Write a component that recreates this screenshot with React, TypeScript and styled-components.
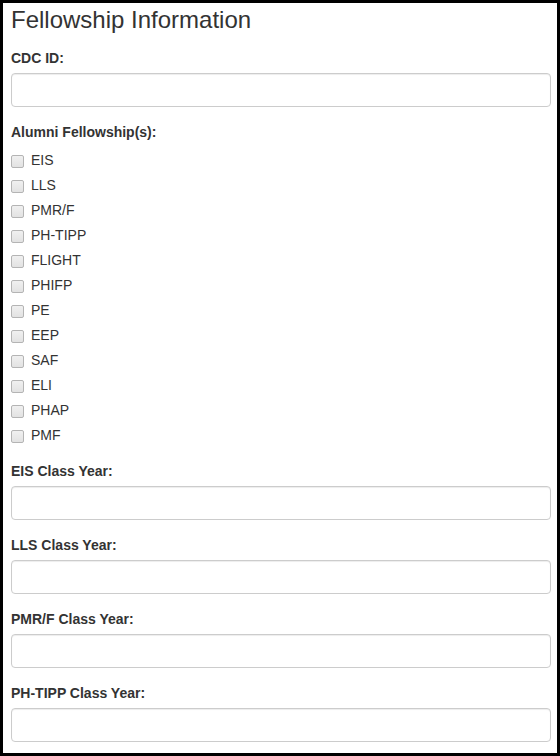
import React from 'react';
import styled, { createGlobalStyle } from 'styled-components';

const GlobalStyle = createGlobalStyle`
  html, body {
    margin: 0;
    padding: 0;
    background: #fff;
  }
  body {
    font-family: "Liberation Sans", Arial, Helvetica, sans-serif;
    font-size: 14px;
    line-height: 1.42857;
    color: #333;
  }
  * {
    box-sizing: border-box;
  }
`;

const StyledFrame = styled.div`
  height: 100vh;
  border: 3px solid #000;
  padding: 4px 6px 0 8px;
  overflow: hidden;
  background: #fff;
`;

const StyledTitle = styled.h3`
  font-size: 24px;
  font-weight: 500;
  line-height: 1.1;
  margin: 0 0 15px 0;
  color: #333;
`;

const StyledFormGroup = styled.div<{ $bottom?: number }>`
  margin-bottom: ${(p) => p.$bottom ?? 15}px;
`;

const StyledLabel = styled.label`
  display: block;
  font-weight: 700;
  font-size: 14px;
  line-height: 20px;
  margin-bottom: 5px;
`;

const StyledInput = styled.input`
  display: block;
  width: 100%;
  height: 34px;
  padding: 6px 12px;
  font-family: inherit;
  font-size: 14px;
  color: #555;
  background: #fff;
  border: 1px solid #ccc;
  border-radius: 4px;
  box-shadow: inset 0 1px 1px rgba(0, 0, 0, 0.075);
  outline: none;
`;

const StyledCheckList = styled.div`
  display: flex;
  flex-direction: column;
  gap: 5px;
  padding-top: 4px;
`;

const StyledCheckRow = styled.label`
  display: flex;
  align-items: center;
  height: 20px;
  font-size: 14px;
  font-weight: 400;
  color: #333;
  cursor: pointer;
`;

const StyledCheckbox = styled.input`
  appearance: none;
  width: 13px;
  height: 13px;
  margin: 1px 7px 0 0;
  border: 1px solid #b4b4b4;
  border-radius: 2px;
  background: linear-gradient(#f0f0f0, #e2e2e2);
  flex-shrink: 0;
`;

const fellowships = ['EIS', 'LLS', 'PMR/F', 'PH-TIPP', 'FLIGHT', 'PHIFP', 'PE', 'EEP', 'SAF', 'ELI', 'PHAP', 'PMF'];
const classYears = ['EIS', 'LLS', 'PMR/F', 'PH-TIPP'];

function App() {
  return (
    <>
      <GlobalStyle />
      <StyledFrame>
        <StyledTitle>Fellowship Information</StyledTitle>

        <StyledFormGroup>
          <StyledLabel htmlFor="cdc-id">CDC ID:</StyledLabel>
          <StyledInput id="cdc-id" type="text" />
        </StyledFormGroup>

        <StyledFormGroup>
          <StyledLabel>Alumni Fellowship(s):</StyledLabel>
          <StyledCheckList>
            {fellowships.map((name) => (
              <StyledCheckRow key={name}>
                <StyledCheckbox type="checkbox" />
                {name}
              </StyledCheckRow>
            ))}
          </StyledCheckList>
        </StyledFormGroup>

        {classYears.map((name) => (
          <StyledFormGroup key={name}>
            <StyledLabel>{name} Class Year:</StyledLabel>
            <StyledInput type="text" />
          </StyledFormGroup>
        ))}
      </StyledFrame>
    </>
  );
}

export default App;
